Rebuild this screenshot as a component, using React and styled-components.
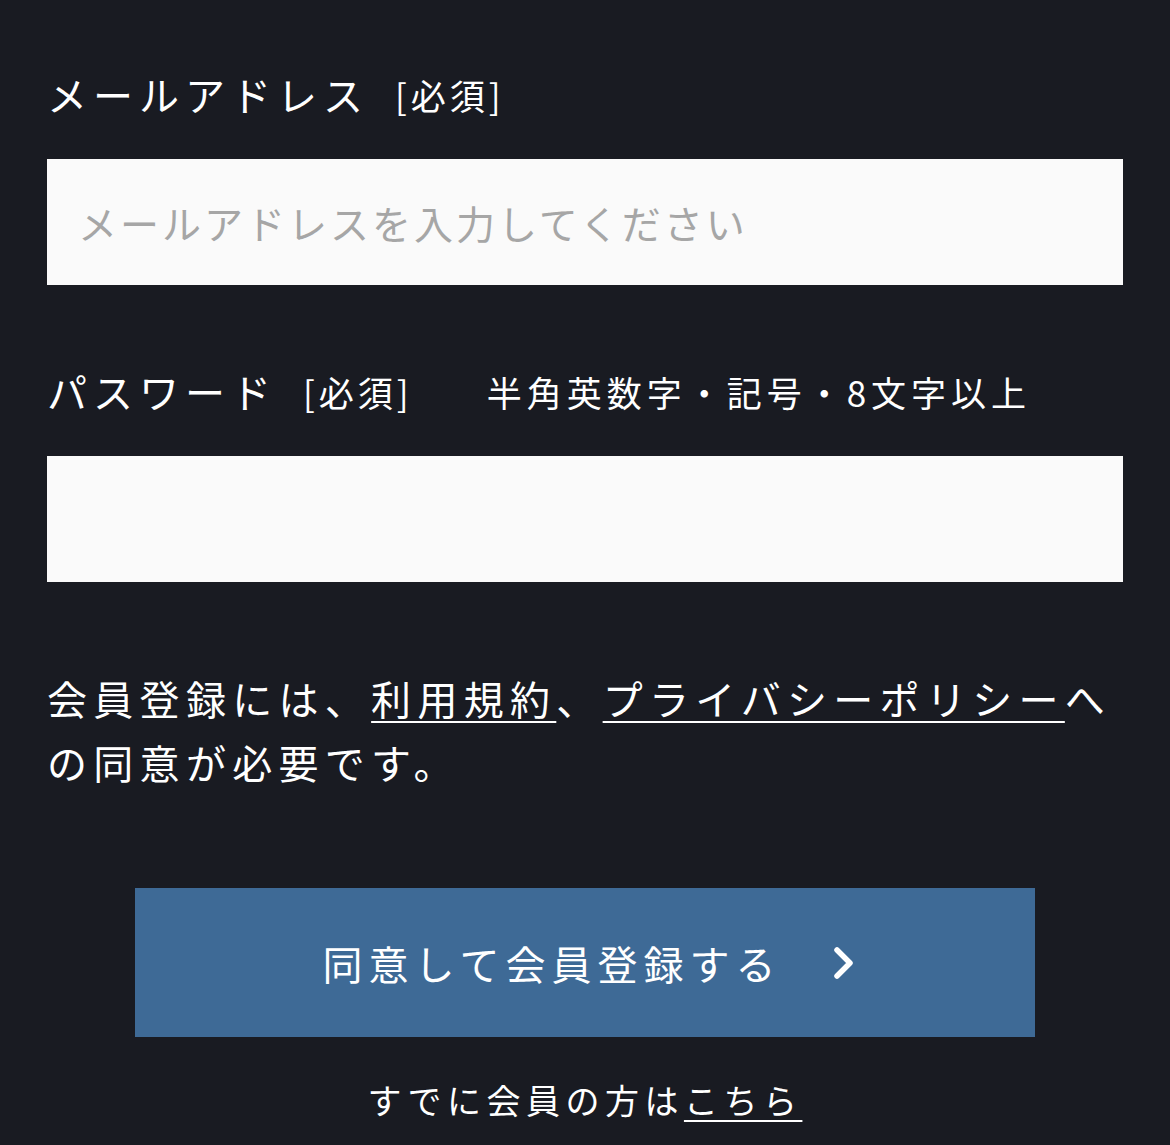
import React from 'react';
import styled, { createGlobalStyle } from 'styled-components';

const GlobalStyle = createGlobalStyle`
  html, body {
    margin: 0;
    padding: 0;
    background: #191b22;
  }
  body {
    font-family: "Noto Sans CJK JP", "Noto Sans", sans-serif;
    color: #ffffff;
  }
`;

const Page = styled.div`
  width: 1170px;
  min-height: 1145px;
  box-sizing: border-box;
  padding: 64px 47px 0;
  background: #191b22;
`;

const Field = styled.div`
  display: flex;
  flex-direction: column;
  margin-bottom: ${(p) => p.$gap || 0}px;
`;

const LabelRow = styled.div`
  display: flex;
  align-items: center;
  height: 60px;
  margin-bottom: 35px;
`;

const Label = styled.span`
  font-size: 40px;
  letter-spacing: 6px;
  color: #ffffff;
`;

const Required = styled.span`
  font-size: 35px;
  letter-spacing: 4px;
  margin-left: 26px;
  color: #ffffff;
`;

const Hint = styled.span`
  font-size: 35px;
  letter-spacing: 5px;
  margin-left: 74px;
  color: #ffffff;
`;

const Input = styled.input`
  box-sizing: border-box;
  width: 100%;
  height: 126px;
  border: none;
  outline: none;
  background: #fafafa;
  padding: 0 31px;
  font-family: inherit;
  font-size: 39px;
  letter-spacing: 3px;
  color: #333;

  &::placeholder {
    color: #a6a6a6;
  }
`;

const Notice = styled.p`
  margin: 0 0 94px;
  font-size: 40px;
  line-height: 64px;
  letter-spacing: 6.3px;
  color: #ffffff;
`;

const TextLink = styled.a`
  color: #ffffff;
  text-decoration: underline;
  text-decoration-thickness: 2px;
  text-underline-offset: 6px;
`;

const SubmitButton = styled.button`
  display: flex;
  align-items: center;
  justify-content: center;
  gap: 50px;
  width: 900px;
  height: 149px;
  margin: 0 auto;
  border: none;
  background: #3e6a96;
  color: #ffffff;
  font-family: inherit;
  font-size: 40px;
  letter-spacing: 6px;
  cursor: pointer;
  padding: 0 0 0 10px;
`;

const Footer = styled.p`
  margin: 38px 0 0;
  text-align: center;
  font-size: 34px;
  line-height: 50px;
  letter-spacing: 5.5px;
  color: #ffffff;
`;

const Chevron = () => (
  <svg width="26" height="34" viewBox="0 0 26 34" fill="none">
    <path d="M6 4 L19 17 L6 30" stroke="#fff" strokeWidth="5.5" strokeLinecap="round" strokeLinejoin="round" />
  </svg>
);

export default function App() {
  return (
    <>
      <GlobalStyle />
      <Page>
        <Field $gap={76}>
          <LabelRow>
            <Label>メールアドレス</Label>
            <Required>[必須]</Required>
          </LabelRow>
          <Input type="email" placeholder="メールアドレスを入力してください" />
        </Field>
        <Field $gap={84}>
          <LabelRow>
            <Label>パスワード</Label>
            <Required>[必須]</Required>
            <Hint>半角英数字・記号・8文字以上</Hint>
          </LabelRow>
          <Input type="password" />
        </Field>
        <Notice>
          会員登録には、<TextLink href="#">利用規約</TextLink>、<TextLink href="#">プライバシーポリシー</TextLink>への同意が必要です。
        </Notice>
        <SubmitButton type="button">
          <span>同意して会員登録する</span>
          <Chevron />
        </SubmitButton>
        <Footer>
          すでに会員の方は<TextLink href="#">こちら</TextLink>
        </Footer>
      </Page>
    </>
  );
}
